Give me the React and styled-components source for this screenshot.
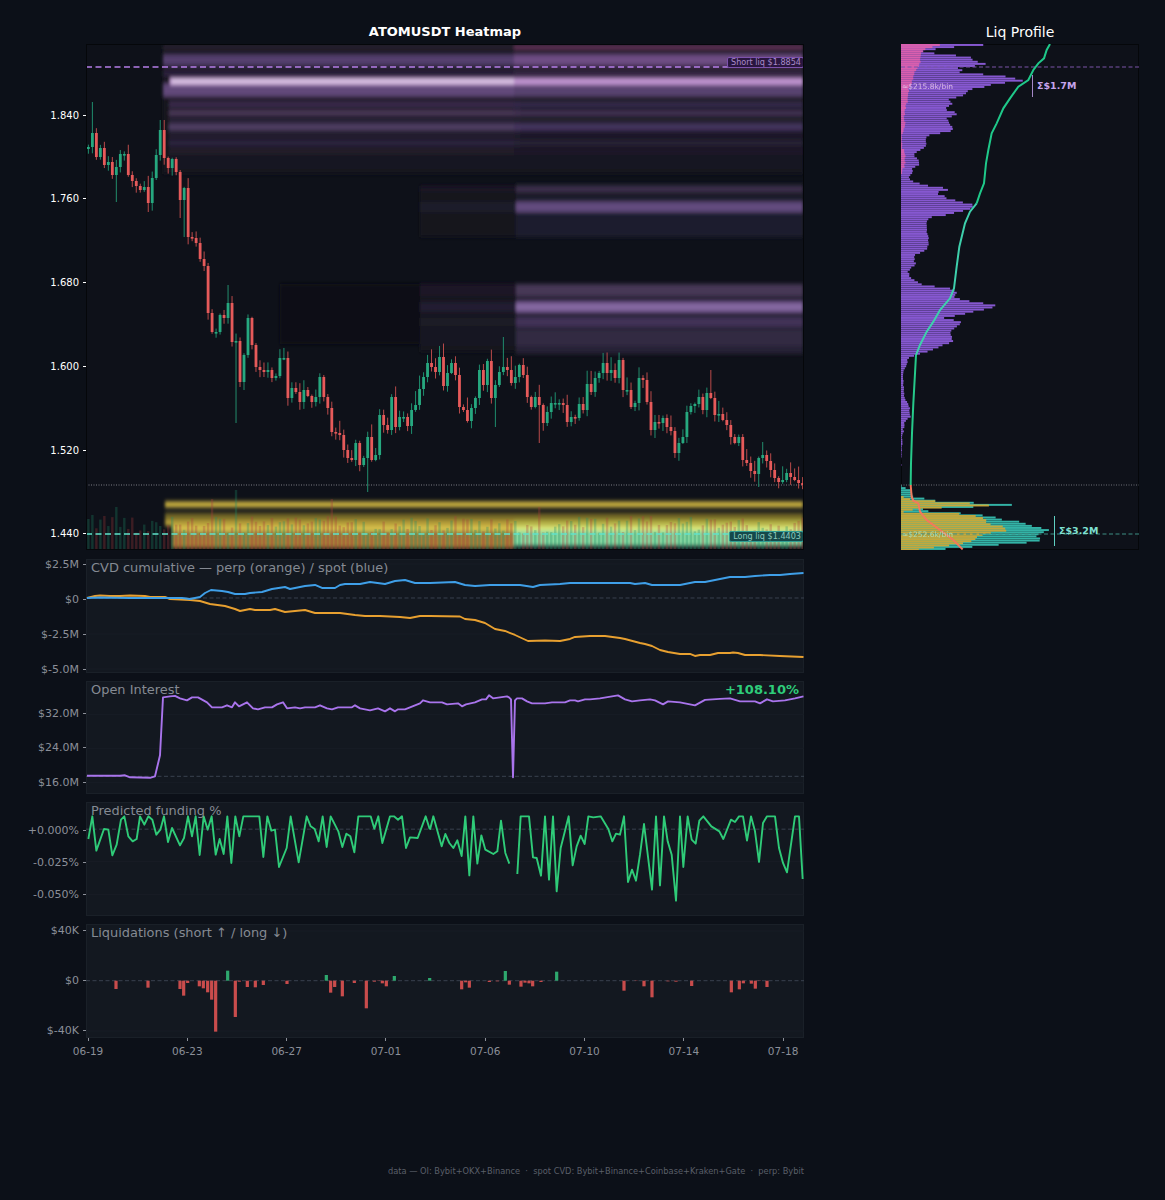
import React from "react";
import styled, { createGlobalStyle } from "styled-components";

const GlobalStyle = createGlobalStyle`
  html, body { margin: 0; padding: 0; background: #0c1018; }
  body { font-family: "DejaVu Sans", sans-serif; }
`;

// seeded random so the wicks and volume stay put between renders
const rng = (seed) => () => {
  seed = (seed + 0x6d2b79f5) | 0;
  let t = Math.imul(seed ^ (seed >>> 15), 1 | seed);
  t = (t + Math.imul(t ^ (t >>> 7), 61 | t)) ^ t;
  return ((t ^ (t >>> 14)) >>> 0) / 4294967296;
};

const lerpAt = (pts, y) => {
  if (y <= pts[0][0]) return pts[0][1];
  for (let i = 1; i < pts.length; i++) {
    if (y <= pts[i][0]) {
      const [a, b] = [pts[i - 1], pts[i]];
      return a[1] + ((b[1] - a[1]) * (y - a[0])) / (b[0] - a[0] || 1);
    }
  }
  return pts[pts.length - 1][1];
};

const toPts = (arr) => arr.map((p) => p.join(",")).join(" ");

/* ---------- data ---------- */

const CLOSES = [
  147, 133, 157, 148, 165, 162, 175, 167, 154, 154, 175, 181, 186, 190, 187, 203, 178, 155, 130, 158,
  168, 159, 172, 200, 188, 237, 238, 243, 259, 266, 313, 332, 332, 315, 318, 303, 342, 341, 382, 355,
  318, 345, 367, 370, 372, 370, 378, 376, 358, 358, 398, 388, 392, 402, 390, 396, 402, 397, 377, 397,
  408, 432, 433, 435, 450, 458, 460, 443, 465, 458, 437, 460, 455, 415, 425, 430, 397, 427, 417, 417,
  426, 410, 405, 389, 377, 363, 367, 372, 357, 386, 373, 363, 375, 407, 410, 421, 408, 398, 370, 385,
  361, 398, 385, 372, 367, 370, 383, 377, 365, 375, 397, 407, 397, 405, 423, 412, 403, 403, 403, 405,
  422, 417, 418, 404, 410, 384, 392, 378, 373, 363, 373, 370, 378, 360, 390, 390, 407, 403, 378, 380,
  402, 430, 422, 423, 418, 427, 431, 453, 443, 437, 412, 406, 404, 397, 410, 393, 398, 415, 414, 420,
  425, 437, 443, 437, 460, 463, 471, 474, 458, 455, 461, 470, 478, 482, 480, 473, 477, 480, 483, 485,
];

const WICK_HIGH = { 1: 102, 18: 120, 19: 120, 35: 285, 104: 337, 156: 370, 169: 442 };
const WICK_LOW = { 7: 202, 15: 212, 23: 218, 24: 237, 37: 423, 70: 492, 102: 427, 113: 443, 168: 487 };
const VOL_TOP = { 37: 490, 31: 499, 7: 507, 61: 499, 113: 507, 4: 516, 1: 515 };

const candles = (() => {
  const r = rng(17);
  return CLOSES.map((c, i) => {
    const o = i === 0 ? c + 2 : CLOSES[i - 1];
    const top = Math.min(o, c);
    const bot = Math.max(o, c);
    const long = r() > 0.8 ? 6 : 0;
    const hi = WICK_HIGH[i] ?? top - 1 - r() * 7 - long;
    const lo = WICK_LOW[i] ?? bot + 1 + r() * 7;
    const vol = VOL_TOP[i] ?? 516 + r() * 18;
    return { x: 88.4 + i * 3.99, top, bot: Math.max(bot, top + 1.6), hi, lo, up: c <= o, vol };
  });
})();

// [y, height, colour in the left block, colour in the right block]
const TOP_BANDS = [
  [47, 4, "#2a2030", "#64345a"],
  [53, 4, "#1f1a28", "#2e2238"],
  [60, 10, "#54406e", "#6e4e84"],
  [68, 3, "#2a2136", "#36283f"],
  [74, 5, "#2e2440", "#3a2b4a"],
  [90, 13, "#62497a", "#584270"],
  [101, 3, "#2a2236", "#29212f"],
  [105, 5, "#3a2c4e", "#362a4e"],
  [113, 5, "#4d3a5c", "#443456"],
  [120, 4, "#2c2338", "#282032"],
  [127, 7, "#503e64", "#45365f"],
  [135, 3, "#2a2238", "#241e32"],
  [143, 7, "#2b233c", "#252036"],
  [152, 6, "#201b2c", "#1d1929"],
  [163, 12, "#191622", "#171520"],
];

const MID_BANDS = [
  [189, 5, "#3f3150", "#1c1926"],
  [207, 10, "#624b7e", "#1e1a2a"],
  [225, 24, "#1f1b2e", "#12121c"],
  [290, 12, "#463757", "#1d1926"],
  [307, 10, "#7a5d98", "#241e30"],
  [322, 9, "#423359", "#1d1a28"],
  [338, 16, "#302943", "#191723"],
];

const CVD_SPOT = [
  [87, 598], [100, 597.5], [130, 598], [160, 598], [182, 598], [190, 599], [200, 597], [205, 593], [211, 590],
  [222, 591], [228, 592], [235, 594], [245, 594], [250, 593], [262, 592], [272, 589], [285, 587], [290, 589],
  [300, 587], [305, 586], [315, 585], [322, 588], [335, 588], [340, 585], [345, 584], [360, 584], [370, 582],
  [385, 584], [395, 581], [405, 580], [415, 583], [430, 583], [455, 582], [465, 585], [475, 586], [490, 585],
  [520, 585], [533, 587], [540, 585], [560, 584], [570, 583], [630, 583], [635, 584], [645, 583], [652, 585],
  [680, 585], [685, 584], [695, 582], [705, 582], [710, 581], [720, 579], [730, 577], [745, 577], [755, 576],
  [770, 575], [780, 575], [790, 574], [803.5, 573],
];

const CVD_PERP = [
  [87, 598], [95, 596], [100, 595.5], [110, 596], [120, 596], [130, 595.5], [145, 596], [150, 597], [165, 597],
  [170, 599], [190, 600], [200, 601], [210, 604], [225, 606], [235, 609], [240, 611], [250, 609], [255, 610],
  [270, 610], [275, 609], [285, 612], [295, 611], [305, 610], [315, 613], [340, 613], [355, 615], [365, 616],
  [380, 616], [400, 617], [410, 618], [420, 616], [430, 616], [460, 616.5], [465, 619], [475, 620], [485, 623],
  [495, 629], [505, 631], [515, 635], [528, 641], [545, 640.5], [560, 641], [570, 639], [575, 637], [590, 636],
  [605, 636], [620, 638], [625, 639], [640, 643], [645, 644], [652, 646], [660, 650], [668, 652], [680, 654],
  [690, 654], [695, 656], [700, 655], [710, 655], [718, 653], [730, 653], [733, 652.5], [738, 653], [745, 655],
  [760, 655], [780, 656], [803.5, 657],
];

const OI = [
  [87, 775.5], [120, 775.5], [125, 775], [130, 777], [150, 777.5], [155, 776], [160, 755], [163, 697], [170, 696],
  [175, 695.5], [180, 698], [187, 700], [192, 697], [198, 697], [207, 702], [212, 707], [222, 707], [227, 705],
  [232, 707], [235, 702], [239, 706], [247, 702], [253, 708], [258, 709], [265, 707], [272, 707], [277, 704],
  [283, 702], [287, 708], [295, 707], [300, 708], [305, 707], [315, 707], [320, 705], [327, 708], [332, 709],
  [338, 707], [352, 707], [355, 705], [360, 708], [370, 710], [378, 708], [385, 711], [390, 708], [395, 711],
  [398, 709], [405, 709], [420, 703], [423, 700], [430, 702], [442, 702], [447, 704], [458, 703], [462, 706],
  [466, 704], [475, 702], [482, 699], [486, 699], [489, 695], [493, 698], [500, 697], [507, 696], [509, 697],
  [511, 699], [513, 777], [515, 700], [517, 698], [522, 698], [527, 701], [532, 703], [545, 703], [552, 702],
  [565, 702], [570, 700], [575, 700], [578, 701], [585, 699], [590, 699], [600, 698], [618, 695], [625, 699],
  [632, 701], [640, 700], [650, 699], [655, 700], [663, 704], [668, 701], [680, 702], [690, 704], [695, 705],
  [705, 699.5], [720, 698.5], [730, 698], [740, 701], [755, 701], [760, 703], [767, 699], [773, 701], [785, 700],
  [795, 698], [803.5, 696],
];

// traced from 3x crops, so converted back below
const FUND_A = [
  [145, 133], [157, 65], [169, 168], [192, 103], [205, 105], [217, 182], [230, 150], [243, 75], [253, 65], [265, 125],
  [278, 140], [290, 133], [300, 65], [313, 90], [325, 65], [337, 75], [349, 120], [361, 105], [372, 65], [384, 142],
  [396, 100], [420, 152], [432, 130], [444, 65], [456, 125], [467, 65], [479, 181], [491, 65], [503, 105], [515, 65],
  [527, 180], [539, 133], [551, 178], [562, 65], [574, 205], [586, 65], [598, 125], [610, 65], [658, 65], [670, 187],
  [682, 65], [694, 108], [705, 105], [717, 217], [740, 160], [752, 65], [776, 203], [800, 65], [812, 95], [824, 103],
  [836, 140], [848, 65], [860, 157], [872, 65], [895, 110], [907, 157], [919, 117], [931, 125], [943, 173], [955, 65],
  [992, 65], [1003, 102], [1015, 65], [1027, 145], [1050, 65], [1062, 65], [1074, 75], [1086, 65], [1098, 160],
  [1110, 128], [1133, 130], [1157, 65], [1169, 103],
].map(([x, y]) => [40 + x / 3, 795 + y / 3]);

const FUND_B = [
  [0, 105], [10, 65], [35, 155], [46, 118], [58, 145], [70, 160], [82, 137], [95, 184], [106, 65],
  [118, 242], [130, 65], [142, 207], [154, 122], [166, 165], [190, 178], [202, 170], [213, 78], [226, 175], [238, 207],
].map(([x, y]) => [430 + x / 3, 795 + y / 3]);

const FUND_C = [
  [262, 238], [272, 65], [297, 65], [309, 188], [320, 190], [333, 243], [345, 65], [357, 255], [369, 65], [380, 290],
  [392, 160], [416, 65], [428, 212], [440, 155], [452, 123], [464, 148], [475, 65], [490, 68], [512, 65], [535, 103],
  [547, 140], [558, 117], [570, 120], [582, 65], [594, 262], [606, 225], [618, 258], [630, 180], [642, 88], [666, 285],
  [678, 65], [690, 272], [702, 65], [713, 140], [725, 180], [738, 318], [750, 65], [760, 217], [773, 65], [785, 135],
  [797, 147], [808, 78], [820, 65], [844, 95], [868, 110], [880, 133], [903, 75], [915, 82], [927, 65], [939, 65],
  [951, 138], [963, 65], [975, 110], [987, 202], [999, 85], [1011, 65], [1035, 65], [1047, 160], [1059, 205],
  [1071, 233], [1095, 65], [1107, 65], [1118, 253],
].map(([x, y]) => [430 + x / 3, 795 + y / 3]);

const LIQ_ZERO = 980.7;
const LIQ_A = [
  [228, 582], [324, 578], [420, 582], [431, 602], [443, 564], [478, 574], [490, 580], [503, 592], [515, 614], [527, 710],
  [563, 527], [586, 666], [598, 560], [622, 576], [646, 577], [670, 570], [741, 567], [859, 540], [872, 593], [884, 576],
  [907, 604], [943, 564], [979, 640], [1003, 560], [1015, 558], [1027, 565], [1039, 574], [1063, 543], [1169, 549],
].map(([x, y]) => [40 + x / 3, 795 + y / 3]);
const LIQ_B = [
  [95, 583], [107, 562], [118, 578], [226, 528], [178, 561], [238, 569], [202, 559], [273, 575], [285, 563], [297, 565],
  [308, 574], [333, 561], [380, 530], [582, 587], [618, 558], [642, 574], [666, 607], [738, 560], [714, 559], [785, 573],
  [904, 592], [928, 583], [940, 565], [964, 566], [976, 581], [988, 558], [1011, 576],
].map(([x, y]) => [430 + x / 3, 795 + y / 3]);

// profile edges: [y, right edge x]
const z5 = (a) => a.map(([zy, zx]) => [20 + zy / 3, 890 + zx / 3]);
const z6 = (a) => a.map(([zy, zx]) => [290 + zy / 3, 890 + zx / 3]);

const PURPLE = [
  ...z5([
    [72, 320], [80, 210], [85, 150], [90, 125], [95, 95], [100, 130], [105, 180], [110, 240], [120, 250], [125, 262],
    [130, 290], [135, 280], [140, 240], [145, 200], [152, 220], [155, 190], [160, 240], [165, 300], [170, 350],
    [175, 370], [180, 410], [185, 380], [190, 330], [195, 300], [200, 290], [205, 255], [210, 235], [220, 230],
    [230, 210], [236, 185], [240, 170], [250, 190], [255, 180], [262, 170], [270, 170], [280, 205], [285, 200],
    [295, 170], [305, 175], [315, 180], [325, 190], [335, 180], [340, 150], [345, 120], [355, 105], [365, 108],
    [375, 110], [385, 100], [395, 80], [405, 70], [415, 80], [425, 88], [435, 85], [445, 65], [455, 68], [465, 60],
    [475, 58], [485, 70], [495, 100], [505, 170], [510, 175], [515, 150], [520, 130], [525, 160], [535, 170],
    [545, 210], [555, 250], [565, 245], [575, 210], [585, 170], [590, 130], [600, 110], [620, 108], [640, 110],
    [655, 115], [670, 115], [690, 110], [705, 75], [720, 72], [735, 78], [745, 60], [755, 55], [770, 60], [780, 70],
    [795, 100], [805, 180],
  ]),
  ...z6([
    [0, 190], [8, 200], [20, 190], [30, 215], [38, 270], [47, 322], [55, 300], [65, 250], [75, 210], [85, 155],
    [92, 205], [100, 215], [110, 200], [125, 180], [140, 185], [155, 190], [165, 160], [175, 140], [185, 110],
    [195, 80], [205, 55], [220, 50], [235, 45], [250, 40], [300, 42], [320, 40], [340, 55], [360, 60], [380, 60],
    [395, 45], [420, 40], [440, 38], [470, 35], [500, 33], [530, 32],
  ]),
];

const PINK = z5([
  [72, 160], [80, 130], [90, 100], [110, 90], [130, 90], [150, 78], [170, 70], [190, 64], [210, 56], [230, 55],
  [250, 50], [270, 45], [290, 42], [310, 45], [350, 35], [380, 36], [400, 45], [430, 45], [445, 40], [462, 34],
]);

const TEAL = z6([
  [585, 33], [590, 40], [600, 60], [610, 65], [620, 70], [627, 110], [632, 135], [640, 280], [645, 370], [650, 280],
  [655, 135], [660, 60], [665, 135], [672, 245], [680, 310], [690, 340], [697, 405], [705, 410], [715, 460], [722, 480],
  [730, 450], [740, 440], [750, 460], [758, 410], [765, 320], [773, 215], [780, 130],
]);

const YELLOW = z6([
  [612, 32], [620, 35], [630, 70], [640, 235], [645, 320], [650, 240], [655, 90], [665, 32], [672, 215], [680, 270],
  [690, 290], [700, 285], [710, 340], [722, 350], [730, 290], [740, 260], [750, 255], [760, 220], [770, 150], [780, 80],
]);

const CUM_TOP = [
  [480, 72], [470, 90], [462, 115], [445, 130], [430, 150], [415, 180], [385, 200], [360, 235], [340, 265], [320, 310],
  [305, 340], [295, 390], [288, 430], [282, 490], [270, 520], [260, 550],
].map(([x, y]) => [890 + x / 3, 20 + y / 3]);
const CUM_MID = [
  ...[[260, 550], [240, 575], [225, 610], [208, 680], [200, 740], [192, 805]].map(([x, y]) => [890 + x / 3, 20 + y / 3]),
  ...[[180, 25], [150, 60], [130, 95], [110, 125], [90, 165], [78, 195]].map(([x, y]) => [890 + x / 3, 290 + y / 3]),
];
const CUM_LOW = [[78, 195], [75, 250], [70, 340], [66, 430], [63, 520], [62, 585]].map(([x, y]) => [890 + x / 3, 290 + y / 3]);
const CUM_RED = [[62, 585], [65, 620], [70, 632], [85, 640], [90, 665], [110, 690], [150, 720], [190, 750], [218, 778]].map(
  ([x, y]) => [890 + x / 3, 290 + y / 3]
);

const X_LABELS = ["06-19", "06-23", "06-27", "07-01", "07-06", "07-10", "07-14", "07-18"];

/* ---------- styled parts ---------- */

const Page = styled.div`
  display: flex;
  width: 1165px;
  height: 1200px;
  background: #0c1018;
  color: #8b8f98;
  overflow: hidden;
`;

const LeftCol = styled.div`
  width: 804px;
  display: flex;
  flex-direction: column;
`;

const RightCol = styled.div`
  width: 238px;
  margin-left: 97px;
  display: flex;
  flex-direction: column;
`;

const HeatTitle = styled.h1`
  margin: 0;
  height: 44px;
  padding-left: 86px;
  box-sizing: border-box;
  font-size: 13px;
  font-weight: 700;
  line-height: 64px;
  text-align: center;
  color: #fff;
`;

const ProfileTitle = styled.h2`
  margin: 0;
  height: 44px;
  font-size: 14px;
  font-weight: 400;
  line-height: 64px;
  text-align: center;
  color: #fff;
`;

const Row = styled.div`
  display: flex;
  height: ${(p) => p.$h}px;
  margin-bottom: ${(p) => p.$after || 0}px;
`;

const YAxis = styled.div`
  width: 86px;
  flex: none;
  box-sizing: border-box;
  padding: ${(p) => p.$top}px 0 ${(p) => p.$bottom}px;
  display: flex;
  flex-direction: column;
  justify-content: space-between;
`;

const Tick = styled.div`
  height: 0;
  display: flex;
  align-items: center;
  justify-content: flex-end;
  gap: 4px;
  font-size: ${(p) => (p.$main ? 10 : 11)}px;
  color: ${(p) => (p.$main ? "#fff" : "#8b8f98")};
  &::after {
    content: "";
    width: 3px;
    height: 1px;
    background: currentColor;
  }
`;

const Panels = styled.div`
  display: flex;
  flex-direction: column;
  gap: 8px;
`;

const Drawing = styled.svg`
  position: absolute;
  inset: 0;
  display: block;
  width: 100%;
  height: 100%;
`;

const Plot = styled.div`
  position: relative;
  width: 718px;
  height: 100%;
  flex: none;
  background: #0e1119;
  overflow: hidden;
  &::after {
    content: "";
    position: absolute;
    inset: 0;
    border: 1px solid #05070a;
    pointer-events: none;
  }
`;

const Panel = styled.div`
  position: relative;
  width: 718px;
  height: 100%;
  flex: none;
  background: #131820;
  outline: 1px solid #1a2028;
  outline-offset: -1px;
  overflow: hidden;
`;

// bars run over the spine here, unlike the heatmap
const ProfileBox = styled(Plot)`
  width: 238px;
  height: 506px;
  ${Drawing} {
    z-index: 1;
  }
`;

const PanelTitle = styled.div`
  position: absolute;
  left: 5px;
  top: 1px;
  font-size: 12.95px;
  line-height: 15px;
  color: #858a93;
  white-space: nowrap;
`;

const Change = styled.div`
  position: absolute;
  right: 5px;
  top: 1px;
  font-size: 13px;
  font-weight: 700;
  line-height: 15px;
  color: #2ecc7a;
`;

const LiqBadge = styled.div`
  position: absolute;
  right: 0;
  top: ${(p) => p.$top}px;
  height: 9px;
  padding: 0 2px 0 3px;
  font-size: 8.1px;
  line-height: 9px;
  border-radius: 2px;
  white-space: nowrap;
  color: ${(p) => p.$text};
  background: ${(p) => p.$bg};
  border: 1px solid ${(p) => p.$line};
`;

const BinNote = styled.div`
  position: absolute;
  z-index: 2;
  left: 1px;
  top: ${(p) => p.$top}px;
  font-size: 7.5px;
  line-height: 10px;
  color: ${(p) => p.$c};
  opacity: 0.85;
  white-space: nowrap;
`;

const SumNote = styled.div`
  position: absolute;
  z-index: 2;
  left: ${(p) => p.$left}px;
  top: ${(p) => p.$top}px;
  font-size: 9.5px;
  font-weight: 700;
  line-height: 12px;
  color: ${(p) => p.$c};
  white-space: nowrap;
`;

const XAxis = styled.div`
  display: flex;
  padding-left: 38.4px;
`;

const XTick = styled.div`
  width: 99.3px;
  flex: none;
  display: flex;
  flex-direction: column;
  align-items: center;
  font-size: 10.5px;
  line-height: 12px;
  color: #8b8f98;
  &::before {
    content: "";
    width: 1px;
    height: 3px;
    margin-bottom: 4px;
    background: #8b8f98;
  }
`;

const Footer = styled.div`
  margin-top: 109px;
  font-size: 8.25px;
  line-height: 10px;
  text-align: right;
  white-space: pre;
  color: #5a5f68;
`;

/* ---------- drawings ---------- */

const HeatBands = () => {
  const A = 163;
  const M = 514;
  const E = 803;
  return (
    <g filter="url(#soft)">
      <rect x={A} y={44} width={M - A} height={130} fill="#17141f" />
      <rect x={M} y={44} width={E - M} height={130} fill="#16131f" />
      {TOP_BANDS.map(([y, h, ca, cb]) => (
        <g key={y}>
          <rect x={y > 100 ? A + 6 : A} y={y - h / 2} width={M - A} height={h} fill={ca} />
          <rect x={M} y={y - h / 2} width={E - M} height={h} fill={cb} />
        </g>
      ))}
      <rect x={170} y={78} width={M - 170} height={7} fill="#c09ad2" />
      <rect x={172} y={80.2} width={M - 172} height={2.4} fill="#eee0f3" />
      <rect x={M} y={78} width={E - M} height={7} fill="#b085c2" />
      <rect x={M} y={80.2} width={E - M} height={2.4} fill="#cda2dc" />

      <rect x={420} y={186} width={96} height={40} fill="#13121d" />
      <rect x={516} y={184} width={E - 516} height={46} fill="#1d1a2b" />
      <rect x={280} y={284} width={140} height={60} fill="#0f1019" />
      <rect x={420} y={284} width={96} height={68} fill="#13121c" />
      <rect x={516} y={284} width={E - 516} height={70} fill="#262036" />
      {MID_BANDS.map(([y, h, cb, ca]) => (
        <g key={y}>
          <rect x={420} y={y - h / 2} width={96} height={h} fill={ca} />
          <rect x={516} y={y - h / 2} width={E - 516} height={h} fill={cb} />
        </g>
      ))}
      <rect x={516} y={305.5} width={E - 516} height={3} fill="#8a70a6" />

      {/* long side, yellow to green */}
      <rect x={165} y={501.5} width={E - 165} height={6} fill="#d0b640" />
      <rect x={165} y={513} width={E - 165} height={8} fill="#726628" />
      <rect x={165} y={520} width={E - 165} height={6} fill="#b39b38" />
      <rect x={172} y={526} width={M - 172} height={5} fill="#dcc44e" />
      <rect x={172} y={531} width={M - 172} height={5} fill="#8a8c44" />
      <rect x={172} y={536} width={M - 172} height={12} fill="#a67e38" />
      <rect x={M} y={520} width={E - M} height={6} fill="#b2ae42" />
      <rect x={M} y={526} width={E - M} height={5} fill="#dce878" />
      <rect x={M} y={531} width={E - M} height={15} fill="#86d8a0" />
    </g>
  );
};

const Volume = () =>
  candles.map((c) => (
    <rect
      key={c.x}
      x={c.x - 1.2}
      y={c.vol}
      width={2.4}
      height={549 - c.vol}
      fill={c.up ? "#1f8a68" : "#a83c3c"}
      opacity="0.3"
    />
  ));

const Candles = () => (
  <g filter="url(#crisp)">
    {candles.map((c) => (
      <g key={c.x}>
        <line x1={c.x} x2={c.x} y1={c.hi} y2={c.lo} stroke={c.up ? "#1f8c6c" : "#b94a4a"} strokeWidth="1" />
        <rect x={c.x - 1.4} y={c.top} width={2.8} height={c.bot - c.top} fill={c.up ? "#28a87f" : "#e65a5a"} />
      </g>
    ))}
  </g>
);

const HeatChart = () => (
  <Drawing viewBox="86 44 718 506" preserveAspectRatio="none">
    <defs>
      <filter id="soft" x="86" y="44" width="730" height="506" filterUnits="userSpaceOnUse">
        <feGaussianBlur stdDeviation="1.4 2.2" />
      </filter>
      <filter id="crisp" x="86" y="44" width="718" height="506" filterUnits="userSpaceOnUse">
        <feGaussianBlur stdDeviation="0.3" />
      </filter>
    </defs>
    <HeatBands />
    <Volume />
    <line x1="86" x2="804" y1="485" y2="485" stroke="#7c7f86" strokeWidth="1" strokeDasharray="1 1.5" />
    <Candles />
    <line x1="86" x2="728" y1="67" y2="67" stroke="#b57ee8" strokeWidth="1.5" strokeDasharray="6 3.5" />
    <line x1="86" x2="730" y1="534" y2="534" stroke="#60e2ca" strokeWidth="1.5" strokeDasharray="6 3.5" />
  </Drawing>
);

const ProfileBars = ({ edge, from, to, fill, seed }) => {
  const r = rng(seed);
  const rows = [];
  for (let y = from; y < to; y += 2.1) {
    const x = lerpAt(edge, y + 1) + (r() - 0.5) * 1.4;
    rows.push(<rect key={y} x={901} y={y} width={Math.max(0, x - 901)} height={1.95} fill={fill} />);
  }
  return rows;
};

const ProfileChart = () => (
  <Drawing viewBox="901 44 238 506" preserveAspectRatio="none">
    <ProfileBars edge={PURPLE} from={44} to={478} fill="#8658d0" seed={3} />
    <ProfileBars edge={PINK} from={44} to={174} fill="#d95fae" seed={5} />
    <ProfileBars edge={TEAL} from={485} to={550} fill="#33b3a6" seed={7} />
    <ProfileBars edge={YELLOW} from={494} to={550} fill="#c4a83c" seed={9} />
    <line x1="901" x2="1139" y1="67" y2="67" stroke="#7a55a8" strokeWidth="1" strokeDasharray="4 2.5" />
    <line x1="901" x2="1139" y1="534" y2="534" stroke="#3c8f84" strokeWidth="1" strokeDasharray="4 2.5" />
    <line x1="901" x2="1139" y1="485" y2="485" stroke="#6e7178" strokeWidth="1" strokeDasharray="1 1.5" />
    <polyline points={toPts(CUM_TOP)} fill="none" stroke="#1fc98a" strokeWidth="2" />
    <polyline points={toPts(CUM_MID)} fill="none" stroke="#3ed0ac" strokeWidth="2" />
    <polyline points={toPts(CUM_LOW)} fill="none" stroke="#26c98a" strokeWidth="2" />
    <polyline points={toPts(CUM_RED)} fill="none" stroke="#f2795c" strokeWidth="2" />
    <line x1="1032.5" x2="1032.5" y1="75" y2="97" stroke="#a488c8" strokeWidth="1" />
    <line x1="1054.5" x2="1054.5" y1="516" y2="546" stroke="#5fd0c2" strokeWidth="1" />
  </Drawing>
);

const PanelChart = ({ top, height, zero, grid = [], children }) => (
  <Drawing viewBox={`86 ${top} 718 ${height}`} preserveAspectRatio="none">
    {grid.map((y) => (
      <line key={y} x1="86" x2="804" y1={y} y2={y} stroke="#181d25" strokeWidth="1" />
    ))}
    {zero && <line x1="86" x2="804" y1={zero} y2={zero} stroke="#39414e" strokeWidth="1" strokeDasharray="4 2.5" />}
    {children}
  </Drawing>
);

const Trace = ({ pts, c, w = 1.9 }) => (
  <polyline points={toPts(pts)} fill="none" stroke={c} strokeWidth={w} strokeLinejoin="round" />
);

const LiqBars = () =>
  [...LIQ_A, ...LIQ_B].map(([x, y]) => (
    <rect
      key={x}
      x={x - 1.6}
      y={Math.min(y, LIQ_ZERO)}
      width={3.2}
      height={Math.abs(y - LIQ_ZERO)}
      fill={y < LIQ_ZERO ? "#2ea86e" : "#c94c4c"}
    />
  ));

const Axis = ({ top, bottom, labels, main }) => (
  <YAxis $top={top} $bottom={bottom}>
    {labels.map((t) => (
      <Tick key={t} $main={main}>
        {t}
      </Tick>
    ))}
  </YAxis>
);

export default function App() {
  return (
    <Page>
      <GlobalStyle />
      <LeftCol>
        <HeatTitle>ATOMUSDT Heatmap</HeatTitle>
        <Row $h={506} $after={9}>
          <Axis top={71} bottom={16} main labels={["1.840", "1.760", "1.680", "1.600", "1.520", "1.440"]} />
          <Plot>
            <HeatChart />
            <LiqBadge $top={13} $text="#a98bc9" $bg="#2a1640" $line="#7d52ad">
              Short liq $1.8854
            </LiqBadge>
            <LiqBadge $top={487} $text="#8cc9bd" $bg="#15494a" $line="#2f9c92">
              Long liq $1.4403
            </LiqBadge>
          </Plot>
        </Row>
        <Panels>
          <Row $h={113.67}>
            <Axis top={5} bottom={3} labels={["$2.5M", "$0", "$-2.5M", "$-5.0M"]} />
            <Panel>
              <PanelChart top={559} height={113.67} zero={598} grid={[564, 634, 669]}>
                <Trace pts={CVD_PERP} c="#e8a030" />
                <Trace pts={CVD_SPOT} c="#3f9fe8" />
              </PanelChart>
              <PanelTitle>CVD cumulative — perp (orange) / spot (blue)</PanelTitle>
            </Panel>
          </Row>
          <Row $h={113.67}>
            <Axis top={33} bottom={12} labels={["$32.0M", "$24.0M", "$16.0M"]} />
            <Panel>
              <PanelChart top={680.67} height={113.67} zero={776} grid={[714, 748, 782]}>
                <Trace pts={OI} c="#a974ec" />
              </PanelChart>
              <PanelTitle>Open Interest</PanelTitle>
              <Change>+108.10%</Change>
            </Panel>
          </Row>
          <Row $h={113.67}>
            <Axis top={28} bottom={21} labels={["+0.000%", "-0.025%", "-0.050%"]} />
            <Panel>
              <PanelChart top={802.33} height={113.67} zero={829.5} grid={[862, 895]}>
                <Trace pts={FUND_A} c="#2fcb78" />
                <Trace pts={FUND_B} c="#2fcb78" />
                <Trace pts={FUND_C} c="#2fcb78" />
              </PanelChart>
              <PanelTitle>Predicted funding %</PanelTitle>
            </Panel>
          </Row>
          <Row $h={113.67}>
            <Axis top={7} bottom={7} labels={["$40K", "$0", "$-40K"]} />
            <Panel>
              <PanelChart top={924} height={113.67} zero={LIQ_ZERO} grid={[931, 1031]}>
                <LiqBars />
              </PanelChart>
              <PanelTitle>Liquidations (short ↑ / long ↓)</PanelTitle>
            </Panel>
          </Row>
        </Panels>
        <XAxis>
          {X_LABELS.map((d) => (
            <XTick key={d}>{d}</XTick>
          ))}
        </XAxis>
        <Footer>{"data — OI: Bybit+OKX+Binance  ·  spot CVD: Bybit+Binance+Coinbase+Kraken+Gate  ·  perp: Bybit"}</Footer>
      </LeftCol>
      <RightCol>
        <ProfileTitle>Liq Profile</ProfileTitle>
        <ProfileBox>
          <ProfileChart />
          <BinNote $top={38} $c="#e6c6ec">≈$215.8k/bin</BinNote>
          <BinNote $top={486} $c="#a6e6c8">≈$252.6k/bin</BinNote>
          <SumNote $left={136} $top={36} $c="#c6a4ec">Σ$1.7M</SumNote>
          <SumNote $left={158} $top={481} $c="#7fe0d2">Σ$3.2M</SumNote>
        </ProfileBox>
      </RightCol>
    </Page>
  );
}
